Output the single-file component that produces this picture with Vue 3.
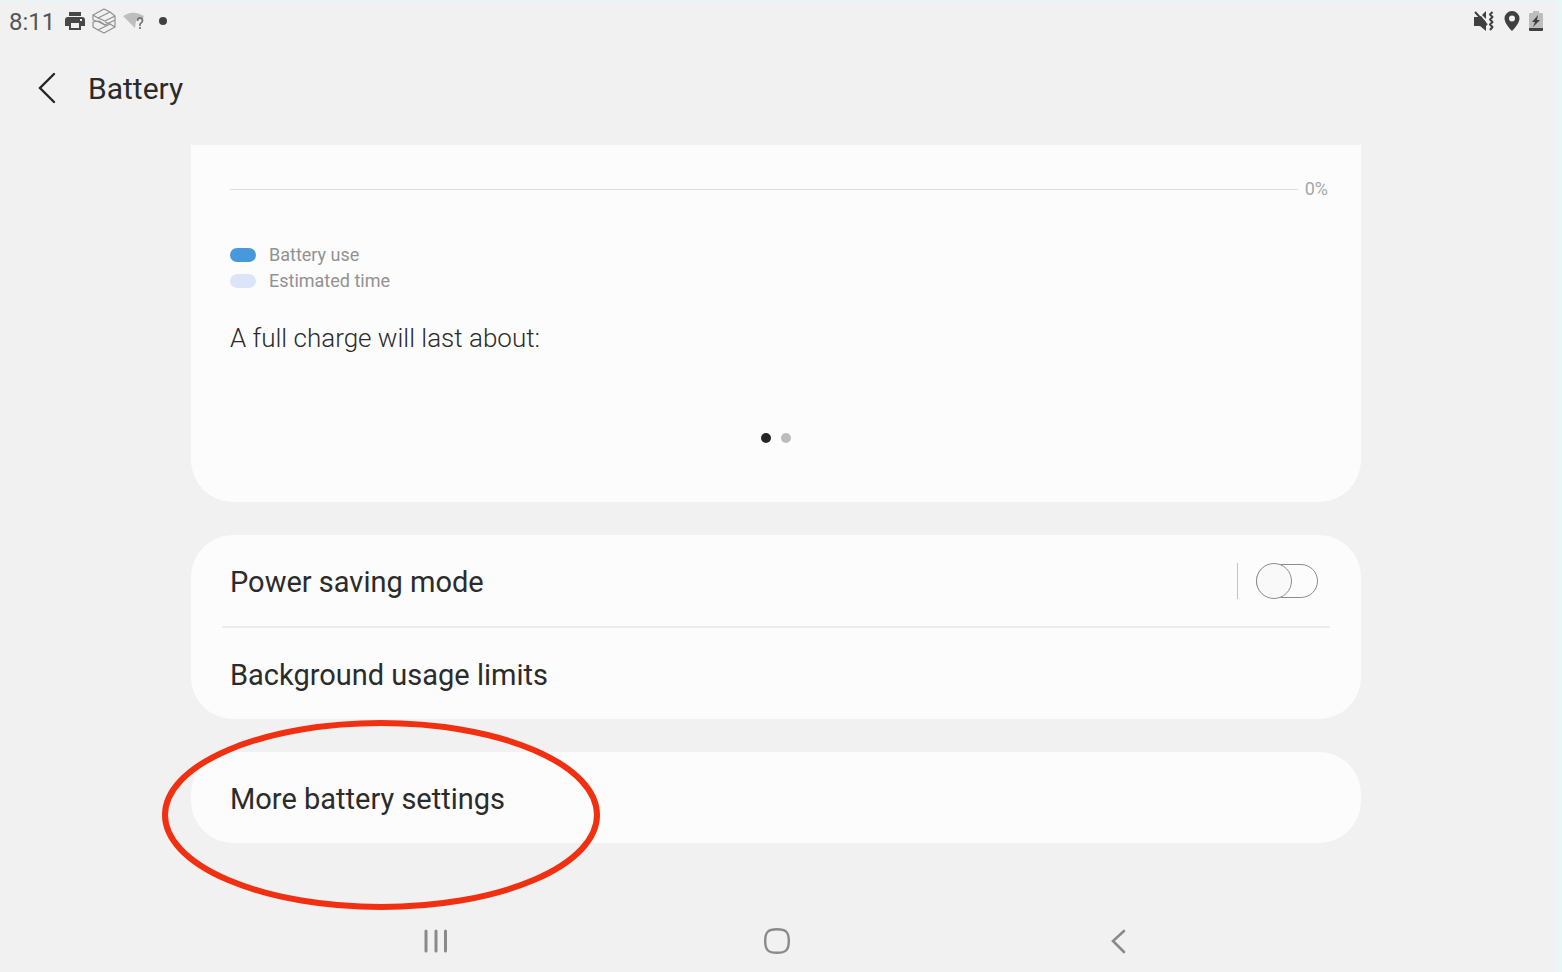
<script setup>
import { ref } from 'vue'

const powerSaving = ref(false)
const page = ref(0)

const legend = [
  { label: 'Battery use', type: 'use' },
  { label: 'Estimated time', type: 'estimate' },
]
</script>
<template>
  <div class="screen">
    <div class="status-bar">
      <div class="status-left">
        <span class="clock">8:11</span>
        <svg class="icon" width="20" height="18" viewBox="0 0 20 18">
          <path fill="#484848" d="M4 0h12v4H4zM3 5h14a3 3 0 0 1 3 3v6h-4v4H4v-4H0V8a3 3 0 0 1 3-3z" />
          <path fill="#f1f1f1" d="M6 11h8v5H6zM15 7h2v2h-2z" />
        </svg>
        <svg class="icon" width="24" height="26" viewBox="0 0 24 26" fill="none" stroke="#909090" stroke-width="1.2" stroke-linejoin="round">
          <path d="M1 12V7l11-6 6 3L6 10l7 3 10-5M18 4l5 4v4l-10 5-6-3-6-2" />
          <path d="M6 10 1 7M23 12v7l-11 6-6-3 12-6-5-2M6 22l-5-3v-5l6-1 6 4M18 16l5 3" />
        </svg>
        <svg class="icon" width="22" height="20" viewBox="0 0 22 20">
          <path fill="#bebebe" d="M0 5Q10-2 21 5l-1 2q-6-2-7 3l-1 7z" />
          <path fill="none" stroke="#777" stroke-width="1.8" d="M14.5 10q0-3 2.500-3t2.500 2.500q0 1.500-1.500 2.500t-1 3M17 16v2" />
        </svg>
        <span class="more-dot"></span>
      </div>
      <div class="status-right">
        <svg class="icon" width="22" height="20" viewBox="0 0 22 20">
          <path fill="#404040" d="M1 6h4l3-1 5 6v9l-6-5H1zM9 4l4-4v8z" />
          <path fill="none" stroke="#404040" stroke-width="2" d="M2 1l12 13" />
          <path fill="none" stroke="#404040" stroke-width="2" stroke-linejoin="round" d="M19.500 1 17 3.500 19.500 6 17 8.500l2.500 2.500-2.500 2.500 2.500 2.500-2.500 3" />
        </svg>
        <svg class="icon" width="16" height="20" viewBox="0 0 16 20">
          <path fill="#404040" fill-rule="evenodd" d="M8 0a7.500 7.500 0 0 1 7.500 7.500C15.500 13 8 20 8 20S.5 13 .5 7.500A7.500 7.500 0 0 1 8 0zm0 4.500a3 3 0 1 0 0 6 3 3 0 0 0 0-6z" />
        </svg>
        <svg class="icon" width="14" height="20" viewBox="0 0 14 20">
          <path fill="#bdbdbd" d="M4 0h6v2h3a1 1 0 0 1 1 1v14H0V3a1 1 0 0 1 1-1h3z" />
          <path fill="#404040" d="M0 17h14v2a1 1 0 0 1-1 1H1a1 1 0 0 1-1-1zM9 4l-6 7h3l-2 5 7-7H8z" />
        </svg>
      </div>
    </div>

    <header class="header">
      <button class="back" type="button" aria-label="Navigate up">
        <svg width="18" height="32" viewBox="0 0 18 32" fill="none" stroke="#252525" stroke-width="2.400" stroke-linecap="round">
          <path d="M16 2 2 16l14 14" />
        </svg>
      </button>
      <h1>Battery</h1>
    </header>

    <main class="content">
      <section class="card usage">
        <div class="axis">
          <span class="axis-line"></span>
          <span class="axis-label">0%</span>
        </div>
        <ul class="legend">
          <li v-for="item in legend" :key="item.type">
            <span class="swatch" :class="item.type"></span>
            {{ item.label }}
          </li>
        </ul>
        <p class="estimate-text">A full charge will last about:</p>
        <div class="pager">
          <button
            v-for="n in 2"
            :key="n"
            type="button"
            class="dot"
            :class="{ active: page === n - 1 }"
            :aria-label="'Page ' + n"
            @click="page = n - 1"
          ></button>
        </div>
      </section>

      <section class="card">
        <div class="row power">
          <label for="power-saving">Power saving mode</label>
          <span class="separator"></span>
          <input id="power-saving" v-model="powerSaving" class="switch" type="checkbox" role="switch" />
        </div>
        <hr />
        <button type="button" class="row">Background usage limits</button>
      </section>

      <section class="card more">
        <button type="button" class="row">More battery settings</button>
        <svg class="marker" width="438" height="190" viewBox="0 0 438 190">
          <ellipse cx="219" cy="95" rx="216" ry="92" fill="none" stroke="#f03010" stroke-width="6" />
        </svg>
      </section>
    </main>

    <nav class="nav-bar">
      <button type="button" aria-label="Recents">
        <svg width="26" height="26" viewBox="0 0 26 26" stroke="#8a8a8a" stroke-width="3" stroke-linecap="round">
          <path d="M3 3v20M13 3v20M22.500 3v20" />
        </svg>
      </button>
      <button type="button" aria-label="Home">
        <svg width="26" height="26" viewBox="0 0 26 26" fill="none" stroke="#8a8a8a" stroke-width="2.400">
          <path d="M13 1.200c9 0 11.800 2.800 11.800 11.800S22 24.800 13 24.800 1.200 22 1.200 13 4 1.200 13 1.200z" />
        </svg>
      </button>
      <button type="button" aria-label="Back">
        <svg width="26" height="26" viewBox="0 0 26 26" fill="none" stroke="#8a8a8a" stroke-width="2.600" stroke-linecap="round">
          <path d="M18 3 7 13l11 11" />
        </svg>
      </button>
    </nav>
  </div>
</template>
<style>
body {
  background: #f1f1f1;
}
</style>
<style scoped>
.screen {
  min-height: 100vh;
  box-sizing: border-box;
  display: flex;
  flex-direction: column;
  border-top: 2px solid #e8f6f6;
  border-right: 6px solid #ebf6f7;
  background: #f1f1f1;
  color: #2b2b2b;
  font-family: Roboto, sans-serif;
}
button {
  border: 0;
  padding: 0;
  background: none;
  color: inherit;
  font-family: inherit;
  cursor: pointer;
}
svg {
  display: block;
}
.status-bar {
  display: flex;
  justify-content: space-between;
  align-items: center;
  height: 38px;
  padding: 0 13px 0 9px;
}
.status-left,
.status-right {
  display: flex;
  align-items: center;
}
.status-left {
  gap: 7px;
}
.status-right {
  gap: 9px;
}
.clock {
  margin-right: 3px;
  padding-top: 2px;
  font-size: 24px;
  line-height: 38px;
  color: #555;
}
.more-dot {
  width: 8px;
  height: 8px;
  margin-left: 7px;
  border-radius: 50%;
  background: #404040;
}
.header {
  display: flex;
  align-items: center;
  gap: 32px;
  height: 96px;
  padding-left: 38px;
  margin-bottom: 9px;
}
h1 {
  margin: 0;
  font-size: 30px;
  font-weight: 400;
}
.content {
  flex: 1;
  display: flex;
  flex-direction: column;
  gap: 33px;
  padding: 0 195px 0 191px;
}
.card {
  border-radius: 42px;
  background: #fcfcfc;
}
.usage {
  box-sizing: border-box;
  padding: 32px 33px 59px 39px;
  border-radius: 0 0 42px 42px;
}
.axis {
  display: flex;
  align-items: center;
  gap: 7px;
  height: 24px;
}
.axis-line {
  flex: 1;
  height: 1px;
  background: #dedede;
}
.axis-label {
  font-size: 18px;
  line-height: 24px;
  color: #a6a6a6;
}
.legend {
  margin: 41px 0 0;
  padding: 0;
  list-style: none;
  font-size: 18px;
  line-height: 26px;
  color: #929292;
}
.legend li {
  display: flex;
  align-items: center;
  gap: 13px;
}
.swatch {
  width: 26px;
  height: 14px;
  border-radius: 7px;
}
.swatch.use {
  background: #4898dc;
}
.swatch.estimate {
  background: #dce5f8;
}
.estimate-text {
  margin: 27px 0 0;
  font-size: 26px;
  font-weight: 300;
  line-height: 34px;
}
.pager {
  display: flex;
  justify-content: center;
  gap: 10px;
  margin-top: 78px;
  padding-right: 6px;
}
.dot {
  width: 10px;
  height: 10px;
  border-radius: 50%;
  background: #bcbcbc;
}
.dot.active {
  background: #252525;
}
.row {
  display: flex;
  align-items: center;
  width: 100%;
  height: 91px;
  box-sizing: border-box;
  padding: 3px 43px 0 39px;
  font-size: 29px;
  text-align: left;
}
.row.power {
  padding-top: 0;
}
.row label {
  flex: 1;
  padding-top: 3px;
}
.separator {
  width: 1px;
  height: 36px;
  margin-right: 18px;
  background: #c4c4c4;
}
.switch {
  appearance: none;
  display: grid;
  align-items: center;
  width: 62px;
  height: 36px;
  margin: 0;
  cursor: pointer;
}
.switch::before,
.switch::after {
  content: '';
  grid-area: 1 / 1;
  box-sizing: border-box;
  border: 1px solid #8c8c8c;
}
.switch::before {
  height: 34px;
  border-radius: 17px;
}
.switch::after {
  width: 36px;
  height: 36px;
  border-radius: 50%;
  background: #f9f9f9;
}
.switch:checked::before {
  background: #4898dc;
}
.switch:checked::after {
  justify-self: end;
}
hr {
  height: 2px;
  margin: 0 31px;
  border: 0;
  background: #ececec;
}
.more {
  position: relative;
}
.marker {
  position: absolute;
  top: -32px;
  left: -29px;
  pointer-events: none;
}
.nav-bar {
  display: grid;
  grid-template-columns: repeat(3, 1fr);
  height: 62px;
  padding: 0 266px 0 265px;
}
.nav-bar button {
  display: flex;
  justify-content: center;
  align-items: center;
}
</style>
